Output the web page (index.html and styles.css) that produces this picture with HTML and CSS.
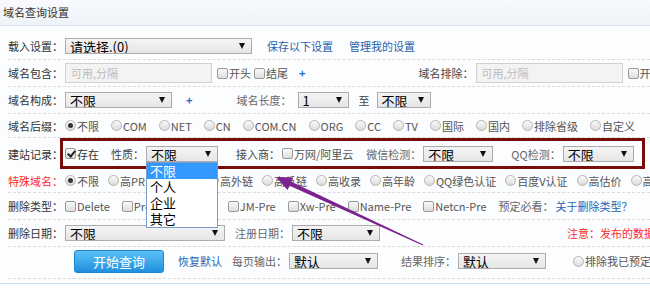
FILE: index.html
```html
<!DOCTYPE html>
<html lang="zh-CN">
<head>
    <meta charset="UTF-8">
    <title>域名查询设置</title>
    <link rel="stylesheet" href="styles.css">
</head>
<body>
<div class="panel">
    <div class="head">域名查询设置</div>
    <div class="form">
        <!-- 载入设置 -->
        <div class="row">
            <span class="lbl">载入设置：</span>
            <span class="sel w187">请选择.(0)</span>
            <a class="link ml15">保存以下设置</a>
            <a class="link ml16">管理我的设置</a>
        </div>
        <div class="row">
            <span class="lbl">域名包含：</span>
            <span class="txt">可用,分隔</span>
            <label class="opt ml5 mr3"><i class="cb"></i>开头</label>
            <label class="opt"><i class="cb"></i>结尾</label>
            <span class="plus ml11">+</span>
            <span class="lbl2 ml113">域名排除：</span>
            <span class="txt">可用,分隔</span>
            <label class="opt ml5"><i class="cb"></i>开头</label>
        </div>
        <div class="row">
            <span class="lbl">域名构成：</span>
            <span class="sel w107">不限</span>
            <span class="plus ml14">+</span>
            <span class="lbl2 soft ml44">域名长度：</span>
            <span class="sel w51 ml4">1</span>
            <span class="lbl2 ml10">至</span>
            <span class="sel w54 ml5">不限</span>
        </div>
        <div class="row short">
            <span class="lbl">域名后缀：</span>
            <div class="opts suffix">
                <label class="opt"><i class="rd on"></i>不限</label>
                <label class="opt"><i class="rd"></i>COM</label>
                <label class="opt"><i class="rd"></i>NET</label>
                <label class="opt"><i class="rd"></i>CN</label>
                <label class="opt"><i class="rd"></i>COM.CN</label>
                <label class="opt"><i class="rd"></i>ORG</label>
                <label class="opt"><i class="rd"></i>CC</label>
                <label class="opt"><i class="rd"></i>TV</label>
                <label class="opt"><i class="rd"></i>国际</label>
                <label class="opt"><i class="rd"></i>国内</label>
                <label class="opt"><i class="rd"></i>排除省级</label>
                <label class="opt"><i class="rd"></i>自定义</label>
            </div>
        </div>
        <!-- 建站记录 (marked box) -->
        <div class="row boxed">
            <span class="lbl narrow">建站记录：</span>
            <div class="mark">
                <label class="opt dark"><i class="cb on"></i>存在</label>
                <span class="lbl2 ml12">性质：</span>
                <span class="drop">
                    <span class="sel w72">不限</span>
                    <ul class="menu">
                        <li class="hi">不限</li>
                        <li>个人</li>
                        <li>企业</li>
                        <li>其它</li>
                    </ul>
                </span>
                <span class="lbl2 ml18">接入商：</span>
                <label class="opt"><i class="cb"></i>万网/阿里云</label>
                <span class="lbl2 soft ml13">微信检测：</span>
                <span class="sel w70">不限</span>
                <span class="lbl2 soft ml18">QQ检测：</span>
                <span class="sel w71">不限</span>
            </div>
        </div>
        <div class="row short">
            <span class="lbl red">特殊域名：</span>
            <div class="opts special">
                <label class="opt"><i class="rd on"></i>不限</label>
                <label class="opt"><i class="rd"></i>高PR</label>
                <label class="opt"><i class="rd"></i>高权重</label>
                <label class="opt"><i class="rd"></i>高外链</label>
                <label class="opt"><i class="rd"></i>高反链</label>
                <label class="opt"><i class="rd"></i>高收录</label>
                <label class="opt"><i class="rd"></i>高年龄</label>
                <label class="opt"><i class="rd"></i>QQ绿色认证</label>
                <label class="opt"><i class="rd"></i>百度V认证</label>
                <label class="opt"><i class="rd"></i>高估价</label>
                <label class="opt"><i class="rd"></i>高流量</label>
            </div>
        </div>
        <div class="row">
            <span class="lbl">删除类型：</span>
            <div class="opts wide">
                <label class="opt"><i class="cb"></i>Delete</label>
                <label class="opt long"><i class="cb"></i>PreRelease</label>
                <label class="opt"><i class="cb"></i>JM-Pre</label>
                <label class="opt"><i class="cb"></i>Xw-Pre</label>
                <label class="opt"><i class="cb"></i>Name-Pre</label>
                <label class="opt"><i class="cb"></i>Netcn-Pre</label>
            </div>
            <span class="lbl2 soft">预定必看：</span>
            <a class="link">关于删除类型？</a>
        </div>
        <div class="row">
            <span class="lbl">删除日期：</span>
            <span class="sel w160">不限</span>
            <span class="lbl2 soft ml10">注册日期：</span>
            <span class="sel w88">不限</span>
            <span class="note">注意：发布的数据仅供参考，以实际为准</span>
        </div>
        <div class="row last">
            <button class="go">开始查询</button>
            <a class="link ml14">恢复默认</a>
            <span class="lbl2 soft ml10">每页输出：</span>
            <span class="sel w89">默认</span>
            <span class="lbl2 soft ml23">结果排序：</span>
            <span class="sel w88">默认</span>
            <label class="opt ml27"><i class="rd"></i>排除我已预定域名</label>
        </div>
    </div>
    <div class="foot"></div>

    <svg class="arrow" width="650" height="291" viewBox="0 0 650 291">
        <polygon points="276,177 293.4,177.4 291.4,181.7 423.2,244.5 422.8,245.5 289.6,185.7 287.6,190 276,177" fill="#7c2290"/>
    </svg>
</div>
</body>
</html>
```

FILE: styles.css
```css
body {
    margin: 0;
    background: #fff;
    font-family: "Noto Sans CJK SC", sans-serif;
    font-size: 11px;
    color: #333;
    overflow: hidden;
}
.panel {
    position: relative;
    width: 650px;
    height: 291px;
    overflow: hidden;
    background: #fcfdfe;
}
.head {
    height: 25px;
    line-height: 25px;
    padding-left: 3px;
    border-bottom: 1px solid #d9e2ec;
    background: linear-gradient(#f8fafd, #eef3f8);
    color: #333;
}
.form {
    padding: 7px 0 0 8px;
}
.row {
    display: flex;
    align-items: center;
    height: 26px;
    border-bottom: 1px dashed #dcdcdc;
    white-space: nowrap;
}
.row > *, .opts > *, .mark > * {
    flex: none;
}
.row.short {
    height: 23px;
}
.row.boxed {
    height: 31px;
    border-bottom: none;
}
.row.last {
    height: 28px;
    padding-bottom: 3px;
}
.foot {
    margin-top: 4px;
    border-top: 1px solid #cfe2f2;
    height: 10px;
    background: #fff;
}

/* labels */
.lbl {
    width: 57px;
    color: #333;
}
.lbl.narrow {
    width: 52px;
}
.lbl2 {
    color: #444;
    margin-right: 2px;
}
.soft {
    color: #666;
}
.red {
    color: #ff2b2b;
}
.link {
    color: #1f63b1;
    cursor: pointer;
}
.plus {
    color: #1c6fc4;
    font-weight: bold;
}
.note {
    color: #ff2b2b;
    margin-left: 187px;
}

/* fake select */
.sel {
    position: relative;
    box-sizing: border-box;
    height: 16px;
    line-height: 16px;
    padding-left: 4px;
    border: 1px solid #acacac;
    background: linear-gradient(#f4f4f4, #e6e6e6);
    color: #000;
    font-size: 13px;
    overflow: hidden;
}
.sel::after {
    content: "";
    position: absolute;
    right: 6px;
    top: 4px;
    border-left: 3.5px solid transparent;
    border-right: 3.5px solid transparent;
    border-top: 6px solid #111;
}
.w187 { width: 187px; }
.w160 { width: 160px; }
.w107 { width: 107px; }
.w89 { width: 89px; }
.w88 { width: 88px; }
.w72 { width: 72px; }
.w71 { width: 71px; }
.w70 { width: 70px; }
.w54 { width: 54px; }
.w51 { width: 51px; }

/* open select list */
.drop {
    position: relative;
    display: inline-flex;
}
.menu {
    position: absolute;
    left: 0;
    top: 100%;
    z-index: 5;
    width: 72px;
    box-sizing: border-box;
    margin: 0;
    padding: 0;
    list-style: none;
    background: #fff;
    border: 1px solid #7b9dcc;
}
.menu li {
    height: 16px;
    line-height: 16px;
    padding-left: 3px;
    font-size: 13px;
    color: #000;
}
.menu li.hi {
    background: #3399ff;
    color: #fff;
}

/* text input */
.txt {
    box-sizing: border-box;
    width: 147px;
    height: 20px;
    line-height: 18px;
    padding-left: 5px;
    border: 1px solid #d0d0d0;
    background: #f3f3f3;
    color: #bbb;
}

/* options */
.opts {
    display: flex;
    align-items: center;
}
.opts .opt {
    margin-right: 10px;
}
.opts.suffix .opt {
    margin-right: 12px;
}
.opts.special .opt {
    margin-right: 9px;
}
.opts.wide .opt {
    margin-right: 12px;
}
.opts.wide .opt.long {
    min-width: 94px;
}
.opt {
    display: inline-flex;
    align-items: center;
    color: #555;
}
.opt.dark {
    color: #333;
}
.cb, .rd {
    position: relative;
    flex: none;
    box-sizing: border-box;
    width: 11px;
    height: 11px;
    margin-right: 1px;
    border: 1px solid #9a9a9a;
    background: linear-gradient(#fafafa, #dcdcdc);
}
.cb {
    border-radius: 2px;
}
.rd {
    border-radius: 50%;
    border-color: #b4b4b4;
}
.rd.on::after {
    content: "";
    position: absolute;
    left: 2px;
    top: 2px;
    width: 5px;
    height: 5px;
    border-radius: 50%;
    background: #333;
}
.cb.on::after {
    content: "";
    position: absolute;
    left: 3px;
    top: 0px;
    width: 3px;
    height: 6px;
    border: solid #222;
    border-width: 0 2px 2px 0;
    transform: rotate(40deg);
}

/* marked row */
.mark {
    display: flex;
    align-items: center;
    box-sizing: border-box;
    height: 31px;
    padding: 0 8px 0 2px;
    border: 3px solid #7a0c0c;
}

/* search button */
.go {
    margin-left: 66px;
    width: 90px;
    height: 23px;
    border: 1px solid #1d86d0;
    border-radius: 3px;
    background: linear-gradient(#5cc0f5, #1f8fdf);
    color: #fff;
    font-family: "Noto Sans CJK SC", sans-serif;
    font-size: 13px;
    cursor: pointer;
    padding: 0;
}

.arrow {
    position: absolute;
    left: 0;
    top: 0;
    z-index: 10;
    pointer-events: none;
}

.ml4 { margin-left: 4px; }
.ml5 { margin-left: 5px; }
.ml10 { margin-left: 10px; }
.ml11 { margin-left: 11px; }
.ml12 { margin-left: 12px; }
.ml13 { margin-left: 13px; }
.ml14 { margin-left: 14px; }
.ml15 { margin-left: 15px; }
.ml16 { margin-left: 16px; }
.ml18 { margin-left: 18px; }
.ml21 { margin-left: 21px; }
.ml23 { margin-left: 23px; }
.ml27 { margin-left: 27px; }
.ml44 { margin-left: 44px; }
.ml113 { margin-left: 113px; }
.mr3 { margin-right: 3px; }
```
